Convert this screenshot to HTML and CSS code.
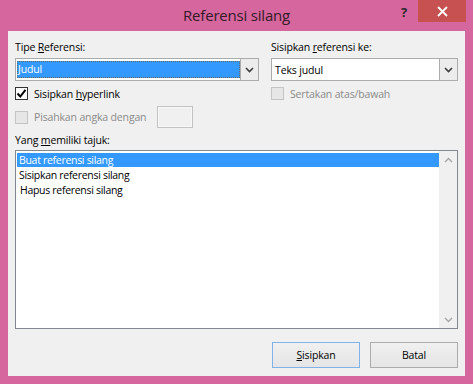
FILE: index.html
```html
<!DOCTYPE html>
<html lang="id">
<head>
<meta charset="utf-8">
<title>Referensi silang</title>
<link rel="stylesheet" href="styles.css">
</head>
<body>
<div class="window">
  <div class="titlebar">
    <div class="title">Referensi silang</div>
    <div class="controls">
      <span class="help">?</span>
      <span class="close"><svg width="11" height="11" viewBox="0 0 11 11"><path d="M1 1 L10 10 M10 1 L1 10" stroke="#ffffff" stroke-width="1.8" fill="none"/></svg></span>
    </div>
  </div>
  <div class="client">
    <div class="top">
      <div class="col col-left">
        <div class="label">Tipe <u>R</u>eferensi:</div>
        <div class="combo">
          <div class="field focused"><span class="sel">Judul</span></div>
          <div class="arrow"><svg width="9" height="6" viewBox="0 0 9 6"><path d="M1 1 L4.5 4.5 L8 1" stroke="#3c3c3c" stroke-width="1.6" fill="none"/></svg></div>
        </div>
        <div class="check"><span class="box checked"><svg width="11" height="11" viewBox="0 0 11 11"><path d="M1.5 5.5 L4.3 8.5 L9.5 1.8" stroke="#000" stroke-width="2" fill="none"/></svg></span><span>Sisipkan <u>h</u>yperlink</span></div>
        <div class="check-row">
          <div class="check disabled"><span class="box"></span><span>Pisahkan angka dengan</span></div>
          <span class="textbox"></span>
        </div>
      </div>
      <div class="col col-right">
        <div class="label">Sisipkan <u>r</u>eferensi ke:</div>
        <div class="combo">
          <div class="field"><span class="val">Teks judul</span></div>
          <div class="arrow"><svg width="9" height="6" viewBox="0 0 9 6"><path d="M1 1 L4.5 4.5 L8 1" stroke="#3c3c3c" stroke-width="1.6" fill="none"/></svg></div>
        </div>
        <div class="check disabled"><span class="box"></span><span>Sertakan atas/bawah</span></div>
      </div>
    </div>
    <div class="label label-list">Yang <u>m</u>emiliki tajuk:</div>
    <div class="list">
      <div class="items">
        <div class="item selected">Buat referensi silang</div>
        <div class="item">Sisipkan referensi silang</div>
        <div class="item shifted">Hapus referensi silang</div>
      </div>
      <div class="scrollbar">
        <span class="sb-btn"><svg width="9" height="6" viewBox="0 0 9 6"><path d="M1 5 L4.5 1.5 L8 5" stroke="#a6a6a6" stroke-width="1.4" fill="none"/></svg></span>
        <span class="sb-btn"><svg width="9" height="6" viewBox="0 0 9 6"><path d="M1 1 L4.5 4.5 L8 1" stroke="#a6a6a6" stroke-width="1.4" fill="none"/></svg></span>
      </div>
    </div>
    <div class="buttons">
      <button class="btn btn-default"><u>S</u>isipkan</button>
      <button class="btn">Batal</button>
    </div>
  </div>
</div>
</body>
</html>
```

FILE: styles.css
```css
html, body {
  margin: 0;
  padding: 0;
  background: #d6669e;
}

body {
  font-family: "Open Sans", "Noto Sans", sans-serif;
  font-size: 10.5px;
  letter-spacing: -0.15px;
  color: #000;
}

.window {
  width: 473px;
  height: 384px;
  box-sizing: border-box;
  background: #d6669e;
  padding: 0 8px 8px;
}

.titlebar {
  height: 31px;
  display: grid;
  grid-template-columns: 1fr auto 1fr;
  margin: 0 -8px;
}

.title {
  grid-column: 2;
  font-size: 15px;
  line-height: 31px;
  color: #331a27;
  letter-spacing: -0.2px;
}

.controls {
  grid-column: 3;
  justify-self: end;
  display: flex;
  align-items: flex-start;
  margin-right: 7px;
}

.help {
  font-size: 13px;
  font-weight: bold;
  line-height: 13px;
  margin-top: 6px;
  margin-right: 11px;
  color: #2a2a2a;
}

.close {
  width: 48px;
  height: 22px;
  background: #c75050;
  display: flex;
  align-items: center;
  justify-content: center;
}

.client {
  height: 345px;
  box-sizing: border-box;
  background: #f0f0f0;
  padding: 9px 7px 8px;
  display: flex;
  flex-direction: column;
}

.top {
  display: flex;
  gap: 12px;
}

.col {
  display: flex;
  flex-direction: column;
}

.col-left {
  width: 244px;
}

.col-right {
  width: 187px;
}

.label {
  line-height: 15px;
  height: 15px;
  white-space: nowrap;
}

.combo {
  margin-top: 3px;
  height: 23px;
  box-sizing: border-box;
  display: flex;
  border: 1px solid #acacac;
  background: #ffffff;
}

.field {
  flex: 1;
  display: flex;
  align-items: center;
  padding-left: 3px;
}

.field.focused {
  padding: 2px 0 2px 1px;
  align-items: stretch;
}

.sel {
  flex: 1;
  background: #3399ff;
  color: #ffffff;
  padding-left: 1px;
  line-height: 17px;
  outline: 1px dotted #6a6a6a;
  outline-offset: -1px;
}

.arrow {
  width: 18px;
  box-sizing: border-box;
  border-left: 1px solid #acacac;
  background: #ececec;
  display: flex;
  align-items: center;
  justify-content: center;
}

.check {
  margin-top: 5px;
  height: 15px;
  display: flex;
  align-items: center;
  white-space: nowrap;
}

.check .box {
  width: 13px;
  height: 13px;
  box-sizing: border-box;
  border: 1px solid #333333;
  background: #ffffff;
  margin-right: 6px;
  display: flex;
  align-items: center;
  justify-content: center;
  flex: none;
}

.check.disabled {
  color: #8a8a8a;
}

.check.disabled .box {
  border-color: #c4c4c4;
  background: #e6e6e6;
}

.check-row {
  margin-top: 5px;
  height: 22px;
  display: flex;
  align-items: center;
}

.check-row .check {
  margin-top: 0;
  width: 142px;
}

.textbox {
  width: 36px;
  height: 22px;
  box-sizing: border-box;
  border: 1px solid #c2c2c2;
  background: #f0f0f0;
  box-shadow: inset 0 0 0 1px #f7f7f7;
}

.label-list {
  margin-top: 5px;
}

.list {
  margin-top: 2px;
  height: 179px;
  box-sizing: border-box;
  border: 1px solid #828790;
  background: #ffffff;
  display: flex;
}

.items {
  flex: 1;
  padding: 1px 0 0 1px;
  letter-spacing: -0.3px;
}

.item {
  height: 15px;
  line-height: 14px;
  padding-left: 2px;
  white-space: nowrap;
}

.item.selected {
  background: #3399ff;
  color: #ffffff;
  height: 14px;
  margin-top: 1px;
  margin-bottom: 1px;
}

.item.shifted {
  padding-left: 3px;
}

.scrollbar {
  width: 18px;
  background: #f0f0f0;
  display: flex;
  flex-direction: column;
  justify-content: space-between;
}

.sb-btn {
  height: 17px;
  display: flex;
  align-items: center;
  justify-content: center;
}

.buttons {
  margin-top: 13px;
  display: flex;
  justify-content: flex-end;
  gap: 10px;
}

.btn {
  width: 88px;
  height: 26px;
  box-sizing: border-box;
  border: 1px solid #acacac;
  background: linear-gradient(#f0f0f0, #e5e5e5);
  font-family: inherit;
  font-size: 10.5px;
  letter-spacing: -0.15px;
  color: #000;
  padding: 0;
  margin: 0;
}

.btn-default {
  border-color: #7eb4ea;
}
```
